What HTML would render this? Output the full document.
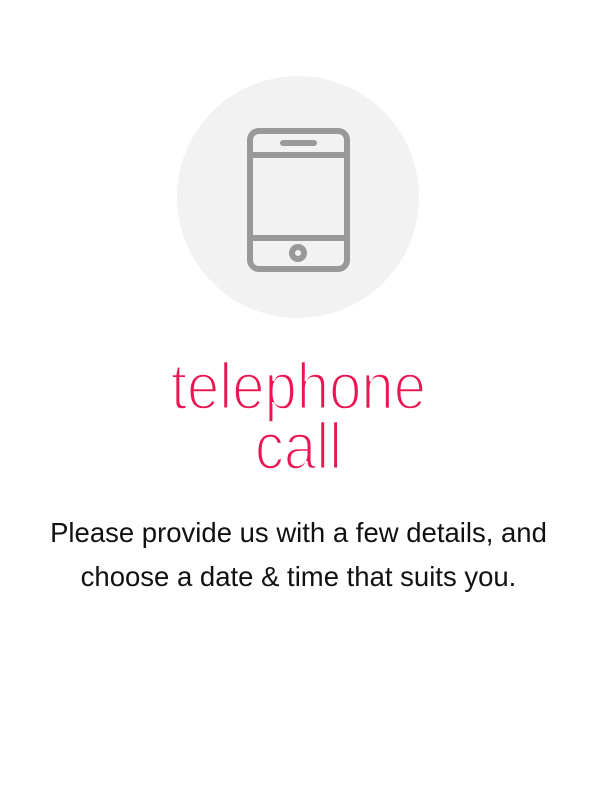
<!DOCTYPE html>
<html><head><style>
html,body{margin:0;padding:0;background:#fff;width:615px;height:799px;overflow:hidden;font-family:"Liberation Sans",Arial,sans-serif}
.c{position:absolute;left:177px;top:76px;width:242px;height:242px;border-radius:50%;background:#f2f2f2}
h1{position:absolute;left:0;width:597px;top:356px;margin:0;text-align:center;font-weight:normal;font-size:66px;line-height:60px;color:#ea1651;letter-spacing:0;-webkit-text-stroke:2.4px #fff;transform:scaleX(0.88);transform-origin:298px 0}
p{position:absolute;left:0;width:597px;top:511px;margin:0;text-align:center;font-size:27.5px;line-height:44px;color:#111}
</style></head><body>
<div class="c"></div>
<svg style="position:absolute;left:0;top:0" width="615" height="799">
<g fill="none" stroke="#999" stroke-width="6">
<rect x="250" y="131" width="97" height="138" rx="9"/>
<line x1="250" y1="155" x2="347" y2="155"/>
<line x1="250" y1="238" x2="347" y2="238"/>
<line x1="283" y1="143" x2="314" y2="143" stroke-linecap="round"/>
<circle cx="298" cy="253" r="6"/>
</g></svg>
<h1>telephone<br>call</h1>
<p>Please provide us with a few details, and<br>choose a date &amp; time that suits you.</p>
</body></html>
